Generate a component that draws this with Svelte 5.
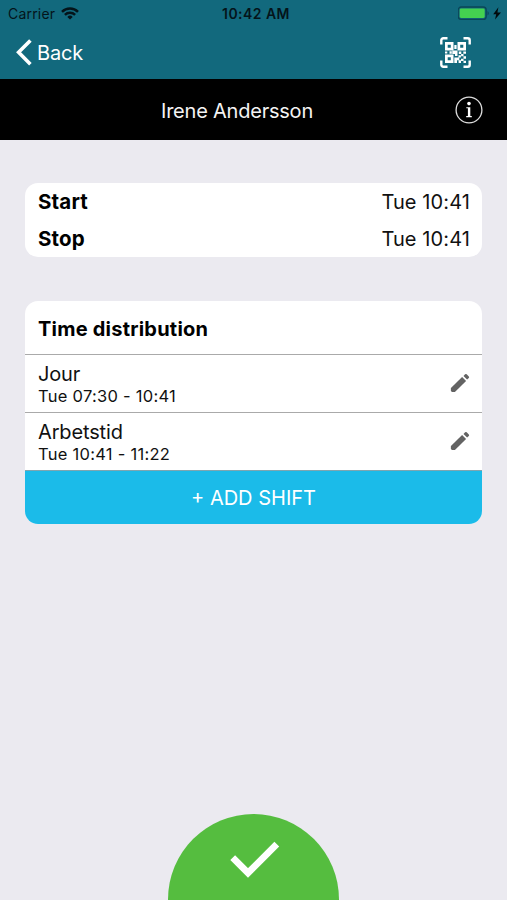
<script lang="ts">
  interface Shift {
    id: number;
    name: string;
    period: string;
  }

  const employee = 'Irene Andersson';

  const times = [
    { label: 'Start', value: 'Tue 10:41' },
    { label: 'Stop', value: 'Tue 10:41' }
  ];

  let shifts = $state<Shift[]>([
    { id: 1, name: 'Jour', period: 'Tue 07:30 - 10:41' },
    { id: 2, name: 'Arbetstid', period: 'Tue 10:41 - 11:22' }
  ]);
</script>

<div class="screen">
  <header>
    <div class="status-bar">
      <div class="carrier">
        <span>Carrier</span>
        <svg width="18" height="13" viewBox="0 0 18 13" fill="none" stroke="#04141a" stroke-width="2.5">
          <path d="M1 4.9a11.4 11.4 0 0 1 16 0" />
          <path d="M3.9 7.9a7.3 7.3 0 0 1 10.2 0" />
          <path d="M9 12.6 6.3 9.9a3.9 3.9 0 0 1 5.4 0z" fill="#04141a" stroke="none" />
        </svg>
      </div>
      <div class="clock">10:42 AM</div>
      <div class="battery">
        <svg width="45" height="15" viewBox="0 0 45 15">
          <rect x="0.2" y="1" width="28" height="12.4" rx="3" fill="none" stroke="#0b4657" stroke-width="1.3" />
          <rect x="1.7" y="2.5" width="25" height="9.4" rx="1.4" fill="#44d150" />
          <path d="M29.5 5c1.8.7 1.8 3.7 0 4.4z" fill="#0b4657" />
          <path d="M40.4 1.2 35.2 8.2h3L37 13.4 43 6.4h-3.6z" fill="#020a0d" />
        </svg>
      </div>
    </div>
    <nav>
      <button class="back">
        <svg width="16" height="27" viewBox="0 0 16 27" fill="none" stroke="#fff" stroke-width="3.6">
          <path d="M14.4 1.4 2.6 13.3 14.4 25.2" />
        </svg>
        <span>Back</span>
      </button>
      <button class="scan" aria-label="Scan code">
        <svg width="31" height="31" viewBox="0 0 31 31" fill="#fff">
          <path
            d="M1.3 7.5V3.3a2 2 0 0 1 2-2h4.2M23.5 1.3h4.2a2 2 0 0 1 2 2v4.2M29.7 23.5v4.2a2 2 0 0 1-2 2h-4.2M7.5 29.7H3.3a2 2 0 0 1-2-2v-4.2"
            fill="none"
            stroke="#fff"
            stroke-width="2.4"
          />
          <path
            fill-rule="evenodd"
            d="M5 5h8.5v8.500H5zM7.7 7.7v3.1h3.1V7.7zM17.5 5H26v8.5h-8.5zM20.2 7.7v3.1h3.1V7.7zM5 17.5h8.5V26H5zM7.7 20.2v3.1h3.1v-3.1z"
          />
          <path
            d="M14.3 8h2.3v4h-2.3zM5 14.4h2.3v2.2H5zM9.5 14.3h2.3v2.4H9.5zM12.3 13.5h5.2V19H15v-2h-2.7zM14.3 20.500h5v2.800H17V26h-2.700zM18.800 14.600h2.500V17h-2.500zM23.300 14.400H26v2.300h-2.700zM21.100 17h2.400v2.300h-2.400zM18.500 18.300h2.400v2.300h-2.400zM23.500 19.300H26v2.500h-2.500zM21 21.700h2.500V24H21zM18.600 23.300H21V26h-2.400zM23.500 23.800H26V26h-2.500z"
          />
        </svg>
      </button>
    </nav>
  </header>

  <div class="title-bar">
    <h1>{employee}</h1>
    <button class="info" aria-label="Info">
      <svg width="28" height="28" viewBox="0 0 28 28" fill="#fff">
        <circle cx="14" cy="14" r="12.9" fill="none" stroke="#ddd" stroke-width="1.3" />
        <circle cx="14" cy="7.6" r="1.8" />
        <path d="M11.3 11.2h4v8.9h1.5v1.1h-5.6v-1.1h1.7v-7.8h-1.6z" />
      </svg>
    </button>
  </div>

  <main>
    <section class="card">
      {#each times as time (time.label)}
        <div class="time-row">
          <strong>{time.label}</strong>
          <span>{time.value}</span>
        </div>
      {/each}
    </section>

    <section class="card">
      <h2>Time distribution</h2>
      {#each shifts as shift (shift.id)}
        <div class="shift">
          <div>
            <div class="shift-name">{shift.name}</div>
            <div class="shift-period">{shift.period}</div>
          </div>
          <button class="edit" aria-label="Edit {shift.name}">
            <svg width="20" height="20" viewBox="0 0 20 20" fill="#636363">
              <path d="M.9 15 12.100 3.900 16.100 7.900 4.900 18.900H2.300q-1.400 0-1.400-1.400z" />
              <path d="m13.500 2.900 1.600-1.600q.8-.7 1.600 0l2.100 2.100q.7.7 0 1.500L17.100 6.500z" />
            </svg>
          </button>
        </div>
      {/each}
      <button class="add">+ ADD SHIFT</button>
    </section>
  </main>

  <button class="confirm" aria-label="Confirm">
    <svg width="50" height="38" viewBox="0 0 50 38" fill="none" stroke="#fff" stroke-width="6.8">
      <path d="M2.7 16.7 18 32 46.8 3.2" />
    </svg>
  </button>
</div>

<style>
  :global(body) {
    background: #ebeaf0;
  }

  .screen {
    display: flex;
    flex-direction: column;
    height: 100vh;
    overflow: hidden;
    background: #ebeaf0;
    color: #111;
    font-family: Inter, 'Liberation Sans', sans-serif;
    font-size: 20px;
  }

  button {
    padding: 0;
    border: 0;
    background: none;
    color: inherit;
    font: inherit;
    letter-spacing: inherit;
    cursor: pointer;
  }

  svg {
    display: block;
  }

  header {
    height: 79px;
    background: #12697d;
  }

  .status-bar {
    display: grid;
    grid-template-columns: 1fr auto 1fr;
    align-items: center;
    height: 27px;
    padding: 0 4px 0 8px;
    color: #04141a;
    font-size: 14px;
  }

  .carrier {
    display: flex;
    align-items: center;
    gap: 6px;
    letter-spacing: 0.2px;
  }

  .clock {
    padding-left: 1px;
    font-weight: 600;
    letter-spacing: 0.45px;
  }

  .battery {
    display: flex;
    justify-content: flex-end;
  }

  nav {
    display: flex;
    align-items: center;
    justify-content: space-between;
    height: 51px;
    padding: 0 36px 0 16px;
    color: #fff;
  }

  .back {
    display: flex;
    align-items: center;
    gap: 5px;
    letter-spacing: -0.15px;
  }

  .title-bar {
    display: flex;
    align-items: center;
    height: 61px;
    padding: 0 24px 0 19px;
    box-sizing: border-box;
    background: #000;
    color: #f4f4f4;
  }

  h1 {
    flex: 1;
    margin: 0;
    padding-top: 2px;
    font-size: 20px;
    font-weight: 400;
    letter-spacing: -0.22px;
    text-align: center;
  }

  main {
    display: flex;
    flex-direction: column;
    gap: 44px;
    padding: 43px 25px 0;
  }

  .card {
    overflow: hidden;
    border-radius: 13px;
    background: #fff;
  }

  .time-row {
    display: flex;
    align-items: center;
    justify-content: space-between;
    height: 37px;
    padding: 0 12px 0 13px;
  }

  .time-row span {
    letter-spacing: 0.1px;
  }

  strong {
    color: #000;
    font-size: 20.5px;
    font-weight: 700;
    letter-spacing: 0.15px;
  }

  h2 {
    height: 53px;
    margin: 0;
    padding: 1px 13px 0;
    box-sizing: border-box;
    color: #000;
    font-size: 20px;
    font-weight: 700;
    letter-spacing: 0.22px;
    line-height: 54px;
  }

  .shift {
    display: flex;
    align-items: center;
    justify-content: space-between;
    height: 58px;
    padding: 0 12px 0 13px;
    box-sizing: border-box;
    border-top: 1px solid #aaa;
  }

  .shift-name {
    letter-spacing: -0.15px;
    line-height: 24px;
  }

  .shift-period {
    font-size: 16.5px;
    letter-spacing: 0.27px;
    line-height: 20px;
  }

  .edit {
    padding-bottom: 1px;
  }

  .add {
    display: block;
    width: 100%;
    height: 54px;
    border-top: 1px solid #7fa5b0;
    background: #1bbbe9;
    color: #fff;
  }

  .confirm {
    display: flex;
    justify-content: center;
    align-self: center;
    width: 171px;
    height: 86px;
    margin-top: auto;
    padding: 27px 0 0 2px;
    box-sizing: border-box;
    border-radius: 86px 86px 0 0;
    background: #55bd3f;
  }
</style>
